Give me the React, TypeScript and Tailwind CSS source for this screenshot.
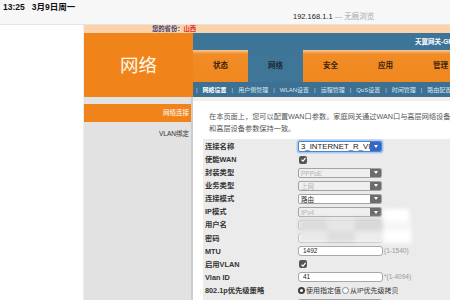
import React from 'react';
import clsx from 'clsx';

const tabs = ['状态', '网络', '安全', '应用', '管理'];
const subNav = ['网络设置', '用户侧管理', 'WLAN设置', '远程管理', 'QoS设置', '时间管理', '路由配置'];

function SelectBox({ value, disabled = false, focused = false }: { value: string; disabled?: boolean; focused?: boolean }) {
    return (
        <div
            className={clsx(
                'flex h-[10px] w-[84px] items-stretch overflow-hidden rounded-[2px] border',
                focused ? 'h-[11px] border-[#4a86d8] shadow-[0_0_0_1.5px_#a9c8f0]' : 'border-[#a3a3a3]',
                disabled ? 'bg-[#efefef]' : 'bg-white'
            )}
        >
            <span
                className={clsx(
                    'min-w-0 flex-1 overflow-hidden whitespace-nowrap pl-[2px]',
                    focused ? 'text-[7.8px] leading-[10px] text-[#111]' : 'text-[6.5px] leading-[9px]',
                    disabled ? 'text-[#b3b3b3]' : 'text-[#222]'
                )}
            >
                {value}
            </span>
            <span className={clsx('flex w-[11px] shrink-0 items-center justify-center', focused ? 'bg-[#3567c2]' : 'bg-[#6c6c6c]')}>
                <span className="h-0 w-0 border-x-[2.5px] border-t-[3px] border-x-transparent border-t-white" />
            </span>
        </div>
    );
}

function TextBox({ value = '' }: { value?: string }) {
    return (
        <div className="flex h-[10px] w-[85px] items-center rounded-[3px] border border-[#a8a8a8] bg-white pl-[4px] text-[6.5px] leading-none text-[#222]">
            {value}
        </div>
    );
}

function Check() {
    return (
        <span className="ml-[1px] flex h-[8px] w-[8px] items-center justify-center rounded-[2px] bg-[#555]">
            <svg viewBox="0 0 10 10" className="h-[7px] w-[7px]">
                <path d="M2.2 5.3 4.3 7.4 8 2.6" stroke="white" strokeWidth="1.7" fill="none" />
            </svg>
        </span>
    );
}

function Hint({ children }: { children: React.ReactNode }) {
    return <span className="ml-[1px] text-[6.5px] leading-none text-[#9a9a9a]">{children}</span>;
}

const rows: { label: string; field: React.ReactNode }[] = [
    { label: '连接名称', field: <SelectBox value="3_INTERNET_R_VID_41" focused /> },
    { label: '使能WAN', field: <Check /> },
    { label: '封装类型', field: <SelectBox value="PPPoE" disabled /> },
    { label: '业务类型', field: <SelectBox value="上网" disabled /> },
    { label: '连接模式', field: <SelectBox value="路由" /> },
    { label: 'IP模式', field: <SelectBox value="IPv4" disabled /> },
    { label: '用户名', field: <TextBox /> },
    { label: '密码', field: <TextBox /> },
    { label: 'MTU', field: <><TextBox value="1492" /><Hint>(1-1540)</Hint></> },
    { label: '启用VLAN', field: <Check /> },
    { label: 'Vlan ID', field: <><TextBox value="41" /><Hint>*(1-4094)</Hint></> },
    {
        label: '802.1p优先级策略',
        field: (
            <div className="flex items-center text-[7px] leading-none text-[#333]">
                <span className="h-[7px] w-[7px] rounded-full border-[2px] border-[#3d3d3d] bg-white" />
                <span className="ml-[1px]">使用指定值</span>
                <span className="ml-[1px] h-[7px] w-[7px] rounded-full border border-[#888] bg-white" />
                <span className="ml-[1px]">从IP优先级拷贝</span>
            </div>
        ),
    },
    { label: '802.1p', field: <SelectBox value="0" /> },
];

export default function App() {
    return (
        <div className="relative flex h-[300px] w-[450px] flex-col overflow-hidden bg-white font-['Liberation_Sans','Noto_Sans_CJK_SC',sans-serif]">
            {/* status bar */}
            <div className="relative h-[25px] shrink-0 border-b border-[#e4e4e4] bg-[#f7f7f7]">
                <div className="flex items-center gap-[7px] pl-[3px] pt-[2px] text-[8.5px] font-bold leading-[10px] text-[#111]">
                    <span>13:25</span>
                    <span>3月9日周一</span>
                </div>
                <div className="absolute left-[293px] top-[13px] text-[7.5px] leading-none">
                    <span className="text-[#222]">192.168.1.1</span>
                    <span className="text-[#aaa]"> — 无痕浏览</span>
                </div>
            </div>

            <div className="flex min-h-0 flex-1">
                {/* iPad side column */}
                <div className="w-[84px] shrink-0 border-r border-[#efefef] bg-white" />

                {/* gateway page */}
                <div className="flex min-w-0 flex-1 flex-col">
                    <div className="h-[8px] shrink-0 bg-[#fbd2aa] pl-[68px] text-[6.3px] font-bold leading-[8px]">
                        <span className="text-[#3a3f7a]">您的省份：</span>
                        <span className="text-[#e02a1c]">山西</span>
                    </div>

                    {/* header */}
                    <div className="flex h-[64px] shrink-0">
                        <div className="flex w-[109px] shrink-0 items-center justify-center bg-[#f0841b] pt-[2px] text-[18.5px] leading-none text-[#fff8ec]">
                            网络
                        </div>
                        <div className="flex min-w-0 flex-1 flex-col">
                            <div className="flex h-[17px] items-center overflow-hidden bg-[#3d7598] pl-[222px] text-[6.5px] font-bold text-white">
                                <span className="whitespace-nowrap">天翼网关-GPON</span>
                            </div>
                            <div className="flex h-[32px] bg-[linear-gradient(to_bottom,#f8c99b_0px,#f18c26_4px,#f0871f_100%)]">
                                {tabs.map((t) => (
                                    <div
                                        key={t}
                                        className={clsx(
                                            'flex w-[55px] shrink-0 items-center justify-center text-[7.5px] font-bold',
                                            t === '网络' ? 'bg-[#3f7698] text-[#1c2a36]' : 'text-[#3a220c]'
                                        )}
                                    >
                                        {t}
                                    </div>
                                ))}
                            </div>
                            <div className="flex h-[15px] items-center gap-[5px] overflow-hidden whitespace-nowrap bg-[#3d7194] pl-[3px] text-[6px] leading-none text-[#dbe6ee]">
                                {subNav.map((s, i) => (
                                    <React.Fragment key={s}>
                                        <span className="w-[2px] text-[#c9d8e3]">|</span>
                                        <span className={clsx(i === 0 && 'font-bold text-white')}>{s}</span>
                                    </React.Fragment>
                                ))}
                            </div>
                        </div>
                    </div>

                    {/* body */}
                    <div className="flex min-h-0 flex-1">
                        <div className="flex w-[109px] shrink-0 flex-col border-r-[2px] border-[#cdcdcd] bg-[#e2e2e2] pt-[7px] text-[6.5px] leading-none">
                            <div className="flex h-[18px] items-center justify-end bg-[#f0841b] pr-[2px] text-white">网络连接</div>
                            <div className="flex h-[24px] items-center justify-end pr-[2px] text-[#333]">VLAN绑定</div>
                        </div>

                        <div className="relative min-w-0 flex-1 overflow-hidden border-t-[4px] border-[#f3eee8] bg-white">
                            <div className="overflow-hidden whitespace-nowrap pl-[16px] pt-[10px] text-[7.2px] leading-[11.5px] text-[#555]">
                                <div>在本页面上，您可以配置WAN口参数。家庭网关通过WAN口与高层网络设备连接，WAN口参数必须</div>
                                <div>和高层设备参数保持一致。</div>
                            </div>

                            <div className="ml-[10px] mt-[5px] h-[200px] bg-[#ebebeb] pl-[2px] pt-[1px]">
                                {rows.map((r, i) => (
                                    <div key={i} className="flex h-[13.1px] items-center">
                                        <span className="w-[93px] shrink-0 text-[7.3px] font-bold leading-none text-[#333]">{r.label}</span>
                                        <div className="flex items-center">{r.field}</div>
                                    </div>
                                ))}
                            </div>

                            {/* privacy blur over username / password */}
                            <div className="absolute left-[106px] top-[117px] grid h-[25px] w-[112px] grid-cols-4 grid-rows-2 blur-[2px]">
                                <div className="bg-[#dcdcdc]" />
                                <div className="bg-[#e6e6e6]" />
                                <div className="bg-[#d9d9d9]" />
                                <div className="bg-[#f7f7f7]" />
                                <div className="bg-[#e9e9e9]" />
                                <div className="bg-[#dedede]" />
                                <div className="bg-[#ececec]" />
                                <div className="bg-white" />
                            </div>
                            <div className="absolute left-[190px] top-[108px] h-[12px] w-[26px] bg-white blur-[2px]" />
                        </div>
                    </div>
                </div>
            </div>
        </div>
    );
}
